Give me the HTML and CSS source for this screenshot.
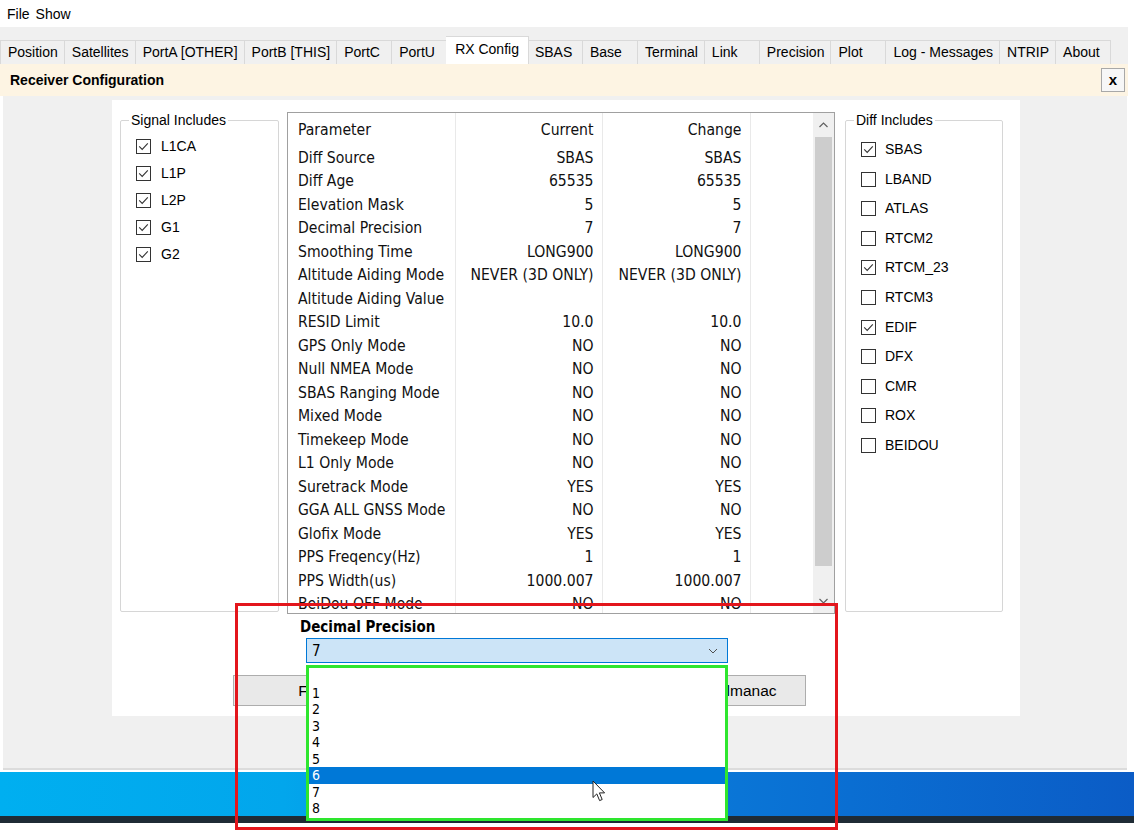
FILE: index.html
```html
<!DOCTYPE html>
<html lang="en">
<head>
    <meta charset="UTF-8">
    <meta name="viewport" content="width=device-width, initial-scale=1.0">
    <title>Receiver Configuration</title>
    <link rel="stylesheet" href="styles.css">
</head>
<body>
    <svg class="defs" width="0" height="0">
        <symbol id="cb-off" viewBox="0 0 15 15">
            <rect x="0.5" y="0.5" width="14" height="14" fill="#fff" stroke="#333"/>
        </symbol>
        <symbol id="cb-on" viewBox="0 0 15 15">
            <rect x="0.5" y="0.5" width="14" height="14" fill="#fff" stroke="#333"/>
            <path d="M3.2 7.4 L6.2 10.4 L11.8 4.4" fill="none" stroke="#333" stroke-width="1.1"/>
        </symbol>
    </svg>

    <div class="screen">
        <div class="menubar">
            <span>File</span>
            <span>Show</span>
        </div>

        <div class="tabstrip">
            <div class="tab">Position</div>
            <div class="tab">Satellites</div>
            <div class="tab">PortA [OTHER]</div>
            <div class="tab">PortB [THIS]</div>
            <div class="tab">PortC</div>
            <div class="tab">PortU</div>
            <div class="tab active">RX Config</div>
            <div class="tab">SBAS</div>
            <div class="tab">Base</div>
            <div class="tab">Terminal</div>
            <div class="tab">Link</div>
            <div class="tab">Precision</div>
            <div class="tab">Plot</div>
            <div class="tab">Log - Messages</div>
            <div class="tab">NTRIP</div>
            <div class="tab">About</div>
        </div>

        <div class="page-header">
            <span class="page-title">Receiver Configuration</span>
            <button class="close-btn">x</button>
        </div>

        <div class="workspace">
            <div class="panel">
                <div class="panel-row">
                    <fieldset class="group signal-group">
                        <legend>Signal Includes</legend>
                        <label class="check"><svg class="box"><use href="#cb-on"/></svg>L1CA</label>
                        <label class="check"><svg class="box"><use href="#cb-on"/></svg>L1P</label>
                        <label class="check"><svg class="box"><use href="#cb-on"/></svg>L2P</label>
                        <label class="check"><svg class="box"><use href="#cb-on"/></svg>G1</label>
                        <label class="check"><svg class="box"><use href="#cb-on"/></svg>G2</label>
                    </fieldset>

                    <div class="grid">
                        <table class="param-table">
                            <colgroup>
                                <col class="col-name">
                                <col class="col-cur">
                                <col class="col-chg">
                                <col class="col-pad">
                            </colgroup>
                            <thead>
                                <tr><th>Parameter</th><th class="num">Current</th><th class="num">Change</th><th></th></tr>
                            </thead>
                            <tbody>
                                <tr><td>Diff Source</td><td class="num">SBAS</td><td class="num">SBAS</td><td></td></tr>
                                <tr><td>Diff Age</td><td class="num">65535</td><td class="num">65535</td><td></td></tr>
                                <tr><td>Elevation Mask</td><td class="num">5</td><td class="num">5</td><td></td></tr>
                                <tr><td>Decimal Precision</td><td class="num">7</td><td class="num">7</td><td></td></tr>
                                <tr><td>Smoothing Time</td><td class="num">LONG900</td><td class="num">LONG900</td><td></td></tr>
                                <tr><td>Altitude Aiding Mode</td><td class="num">NEVER (3D ONLY)</td><td class="num">NEVER (3D ONLY)</td><td></td></tr>
                                <tr><td>Altitude Aiding Value</td><td class="num"></td><td class="num"></td><td></td></tr>
                                <tr><td>RESID Limit</td><td class="num">10.0</td><td class="num">10.0</td><td></td></tr>
                                <tr><td>GPS Only Mode</td><td class="num">NO</td><td class="num">NO</td><td></td></tr>
                                <tr><td>Null NMEA Mode</td><td class="num">NO</td><td class="num">NO</td><td></td></tr>
                                <tr><td>SBAS Ranging Mode</td><td class="num">NO</td><td class="num">NO</td><td></td></tr>
                                <tr><td>Mixed Mode</td><td class="num">NO</td><td class="num">NO</td><td></td></tr>
                                <tr><td>Timekeep Mode</td><td class="num">NO</td><td class="num">NO</td><td></td></tr>
                                <tr><td>L1 Only Mode</td><td class="num">NO</td><td class="num">NO</td><td></td></tr>
                                <tr><td>Suretrack Mode</td><td class="num">YES</td><td class="num">YES</td><td></td></tr>
                                <tr><td>GGA ALL GNSS Mode</td><td class="num">NO</td><td class="num">NO</td><td></td></tr>
                                <tr><td>Glofix Mode</td><td class="num">YES</td><td class="num">YES</td><td></td></tr>
                                <tr><td>PPS Freqency(Hz)</td><td class="num">1</td><td class="num">1</td><td></td></tr>
                                <tr><td>PPS Width(us)</td><td class="num">1000.007</td><td class="num">1000.007</td><td></td></tr>
                                <tr><td>BeiDou OFF Mode</td><td class="num">NO</td><td class="num">NO</td><td></td></tr>
                                <tr><td>GALILEO OFF Mode</td><td class="num">NO</td><td class="num">NO</td><td></td></tr>
                            </tbody>
                        </table>
                        <div class="vscroll">
                            <div class="sb-btn">
                                <svg width="9" height="6" viewBox="0 0 9 6"><path d="M0.5 5 L4.5 1 L8.5 5" fill="none" stroke="#606060" stroke-width="1.2"/></svg>
                            </div>
                            <div class="sb-thumb"></div>
                            <div class="sb-track"></div>
                            <div class="sb-btn">
                                <svg width="9" height="6" viewBox="0 0 9 6"><path d="M0.5 1 L4.5 5 L8.5 1" fill="none" stroke="#606060" stroke-width="1.2"/></svg>
                            </div>
                        </div>
                    </div>

                    <fieldset class="group diff-group">
                        <legend>Diff Includes</legend>
                        <label class="check"><svg class="box"><use href="#cb-on"/></svg>SBAS</label>
                        <label class="check"><svg class="box"><use href="#cb-off"/></svg>LBAND</label>
                        <label class="check"><svg class="box"><use href="#cb-off"/></svg>ATLAS</label>
                        <label class="check"><svg class="box"><use href="#cb-off"/></svg>RTCM2</label>
                        <label class="check"><svg class="box"><use href="#cb-on"/></svg>RTCM_23</label>
                        <label class="check"><svg class="box"><use href="#cb-off"/></svg>RTCM3</label>
                        <label class="check"><svg class="box"><use href="#cb-on"/></svg>EDIF</label>
                        <label class="check"><svg class="box"><use href="#cb-off"/></svg>DFX</label>
                        <label class="check"><svg class="box"><use href="#cb-off"/></svg>CMR</label>
                        <label class="check"><svg class="box"><use href="#cb-off"/></svg>ROX</label>
                        <label class="check"><svg class="box"><use href="#cb-off"/></svg>BEIDOU</label>
                    </fieldset>
                </div>

                <div class="edit-label">Decimal Precision</div>
                <div class="select">
                    <span>7</span>
                    <svg width="10" height="6" viewBox="0 0 10 6"><path d="M1 1 L5 5 L9 1" fill="none" stroke="#505050" stroke-width="1"/></svg>
                </div>

                <div class="buttons">
                    <button class="btn btn-left">Fetch From GPS Receiver</button>
                    <button class="btn btn-right">Request Ephemeris and Almanac</button>
                </div>
            </div>
        </div>

        <div class="taskbar"></div>
        <div class="taskbar-edge"></div>

        <!-- open combo list, drawn over the form and the taskbar -->
        <div class="dropdown">
            <div class="item">&nbsp;</div>
            <div class="item">1</div>
            <div class="item">2</div>
            <div class="item">3</div>
            <div class="item">4</div>
            <div class="item">5</div>
            <div class="item selected">6</div>
            <div class="item">7</div>
            <div class="item">8</div>
        </div>

        <svg class="cursor" width="14" height="23" viewBox="0 0 14 23">
            <path d="M1 1 L1 17.5 L4.8 13.9 L7.6 20.6 L10.2 19.5 L7.4 12.9 L12.6 12.9 Z" fill="#fff" stroke="#222" stroke-width="1" stroke-linejoin="round"/>
        </svg>

        <div class="mark"></div>
    </div>
</body>
</html>
```

FILE: styles.css
```css
* {
    box-sizing: border-box;
}
body {
    margin: 0;
    background-color: #fff;
    font-family: "Liberation Sans", Arial, sans-serif;
    font-size: 14px;
    color: #000;
}
.defs {
    position: absolute;
}
.screen {
    position: relative;
    width: 1134px;
    height: 831px;
    overflow: hidden;
}

/* menu + tabs */
.menubar {
    height: 27px;
    display: flex;
    align-items: center;
    gap: 6px;
    padding-left: 7px;
}
.tabstrip {
    width: 1128px;
    height: 37px;
    display: flex;
    align-items: flex-end;
    background-color: #f0f0f0;
}
.tab {
    height: 24px;
    line-height: 22px;
    min-width: 55px;
    padding: 0 6px 0 7px;
    border: 1px solid #d9d9d9;
    border-left: none;
    border-bottom: none;
    background-color: #f0f0f0;
    white-space: nowrap;
}
.tab:first-child {
    border-left: 1px solid #d9d9d9;
}
.tab.active {
    height: 28px;
    line-height: 24px;
    padding: 0 9px;
    margin: 0 -1px;
    background-color: #fff;
    position: relative;
}
.page-header {
    width: 1128px;
    height: 32px;
    display: flex;
    align-items: center;
    justify-content: space-between;
    padding: 0 3px 0 10px;
    background-color: #fdf4e3;
}
.page-title {
    font-weight: bold;
}
.close-btn {
    width: 24px;
    height: 24px;
    padding: 0 0 2px;
    border: 1px solid #a8a8a8;
    background-color: #f7f7f7;
    font: bold 15px "Liberation Sans", Arial, sans-serif;
    color: #000;
}

/* form area */
.workspace {
    width: 1124px;
    height: 674px;
    margin-left: 3px;
    padding: 4px 0 0 109px;
    background-color: #f0f0f0;
    border-bottom: 2px solid #dcdcdc;
}
.panel {
    width: 908px;
    height: 616px;
    padding: 12px 0 0 8px;
    background-color: #fff;
}
.panel-row {
    display: flex;
    align-items: flex-start;
}
.group {
    height: 500px;
    min-width: 0;
    margin: 0;
    padding: 11px 0 0 8px;
    border: 1px solid #d6d6d6;
    border-radius: 2px;
}
.group legend {
    padding: 0 2px;
    line-height: 16px;
}
.signal-group {
    width: 159px;
    margin-right: 8px;
}
.diff-group {
    width: 158px;
    margin-left: 10px;
    padding-top: 14px;
}
.check {
    display: flex;
    align-items: center;
    gap: 10px;
    height: 15px;
    margin: 0 0 12px 7px;
    line-height: 15px;
}
.diff-group .check {
    gap: 9px;
    margin-bottom: 14.6px;
}
.box {
    width: 15px;
    height: 15px;
    flex: none;
}

/* parameter grid */
.grid {
    display: flex;
    width: 548px;
    height: 502px;
    border: 1px solid #a0a0a0;
    overflow: hidden;
    background-color: #fff;
}
.param-table {
    width: 525px;
    align-self: flex-start;
    border-collapse: collapse;
    table-layout: fixed;
    font-family: "DejaVu Sans Condensed", "DejaVu Sans", sans-serif;
    font-size: 15.6px;
    color: #111;
}
.col-name { width: 167px; }
.col-cur { width: 147px; }
.col-chg { width: 148px; }
.col-pad { width: 63px; }
.param-table th,
.param-table td {
    height: 23.5px;
    padding: 0 8px 0 10px;
    text-align: left;
    font-weight: normal;
    white-space: nowrap;
    overflow: hidden;
    border-left: 1px solid #e9e9e9;
}
.param-table th {
    height: 33px;
    padding-top: 1px;
}
.param-table th:first-child,
.param-table td:first-child {
    border-left: none;
}
.param-table .num {
    text-align: right;
}
.vscroll {
    width: 21px;
    display: flex;
    flex-direction: column;
    background-color: #f0f0f0;
}
.sb-btn {
    height: 24px;
    display: flex;
    align-items: center;
    justify-content: center;
}
.sb-thumb {
    height: 429px;
    margin: 0 2px;
    background-color: #cdcdcd;
}
.sb-track {
    flex: 1;
}

/* edit controls */
.edit-label {
    margin: 5px 0 0 180px;
    line-height: 16px;
    font-family: "DejaVu Sans Condensed", "DejaVu Sans", sans-serif;
    font-size: 15px;
    font-weight: bold;
}
.select {
    width: 422px;
    height: 25px;
    margin: 3px 0 0 186px;
    padding: 0 9px 0 5px;
    display: flex;
    align-items: center;
    justify-content: space-between;
    border: 1px solid #0078d7;
    background-color: #cce4f7;
    font-family: "DejaVu Sans Condensed", "DejaVu Sans", sans-serif;
    font-size: 15px;
}
.buttons {
    display: flex;
    gap: 4px;
    margin: 12px 0 0 113px;
}
.btn {
    height: 31px;
    padding: 0;
    border: 1px solid #adadad;
    background-color: #e9e9e9;
    font-family: "Liberation Sans", Arial, sans-serif;
    font-size: 15.5px;
    color: #000;
    white-space: nowrap;
}
.btn-left {
    width: 284px;
    padding-left: 28px;
}
.btn-right {
    width: 285px;
    padding-right: 4px;
}

/* windows taskbar */
.taskbar {
    height: 44px;
    margin-top: 2px;
    background: linear-gradient(90deg, #00aff0 0%, #02a6ec 25%, #0a80dc 50%, #0a6ed2 75%, #0b5cc6 100%);
}
.taskbar-edge {
    height: 7px;
    background-color: #1f2b35;
}

/* overlays */
.dropdown {
    position: absolute;
    left: 306px;
    top: 665px;
    width: 422px;
    height: 156px;
    border: 3px solid #2ee62e;
    background-color: #fff;
    font-family: "DejaVu Sans Condensed", "DejaVu Sans", sans-serif;
    font-size: 14px;
}
.item {
    height: 16.5px;
    line-height: 16.5px;
    padding-left: 3px;
}
.item.selected {
    background-color: #0078d7;
    color: #fff;
}
.cursor {
    position: absolute;
    left: 592px;
    top: 780px;
}
.mark {
    position: absolute;
    left: 235px;
    top: 603px;
    width: 603px;
    height: 227px;
    border: 3px solid #e3161c;
}
```
